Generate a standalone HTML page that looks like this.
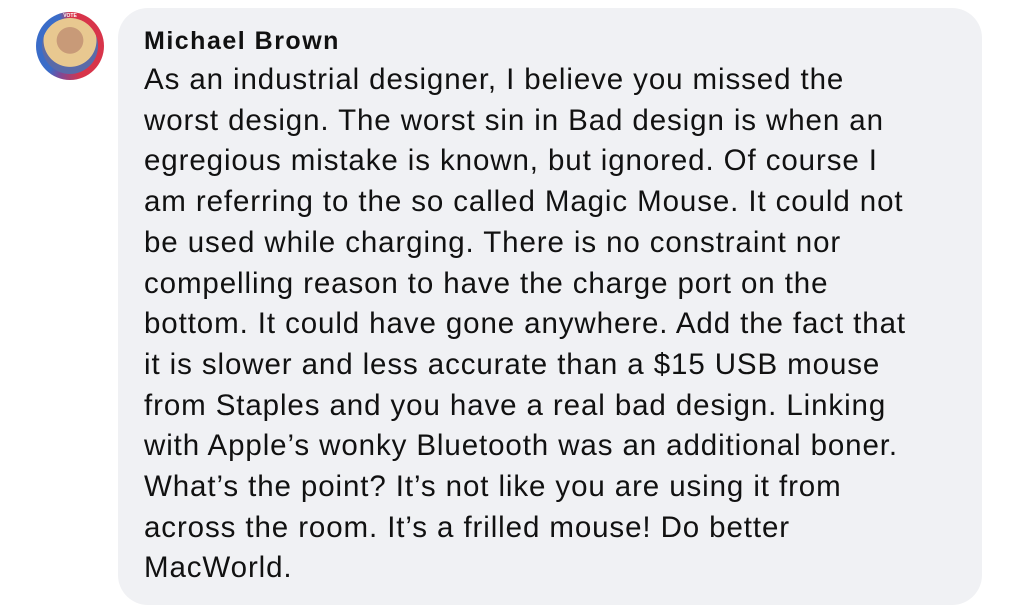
<!DOCTYPE html>
<html><head><meta charset="utf-8"><style>
html,body{margin:0;padding:0;background:#fff;width:1024px;height:613px;overflow:hidden;font-family:"Liberation Sans",sans-serif;}
.av{position:absolute;left:36px;top:12px;width:68px;height:68px;border-radius:50%;background:conic-gradient(#d8344a 0deg,#d8344a 160deg,#7a4a9a 200deg,#3a6cc8 220deg,#3a6cc8 340deg,#d8344a 360deg);}
.av .in{position:absolute;left:6px;top:6px;width:56px;height:56px;border-radius:50%;background:radial-gradient(circle at 50% 40%,#c89a78 0 30%,#e8c890 31% 60%,#5a6aa8 61%);}
.av .t{position:absolute;left:0;right:0;top:1px;text-align:center;font-size:5px;color:#fff;font-weight:bold}
.bub{position:absolute;left:118px;top:8px;width:864px;height:597px;background:#f0f1f4;border-radius:30px;}
.name{position:absolute;left:144px;top:27px;font-size:25px;letter-spacing:1.5px;font-weight:bold;color:#111;}
.txt{position:absolute;left:144px;top:60px;font-size:29.5px;letter-spacing:0.9px;line-height:40.7px;color:#111;white-space:nowrap;}
</style></head><body>
<div class="av"><div class="in"></div><div class="t">VOTE</div></div>
<div class="bub"></div>
<div class="name">Michael Brown</div>
<div class="txt">As an industrial designer, I believe you missed the<br>worst design. The worst sin in Bad design is when an<br>egregious mistake is known, but ignored. Of course I<br>am referring to the so called Magic Mouse. It could not<br>be used while charging. There is no constraint nor<br>compelling reason to have the charge port on the<br>bottom. It could have gone anywhere. Add the fact that<br>it is slower and less accurate than a $15 USB mouse<br>from Staples and you have a real bad design. Linking<br>with Apple’s wonky Bluetooth was an additional boner.<br>What’s the point? It’s not like you are using it from<br>across the room. It’s a frilled mouse! Do better<br>MacWorld.</div>
</body></html>
